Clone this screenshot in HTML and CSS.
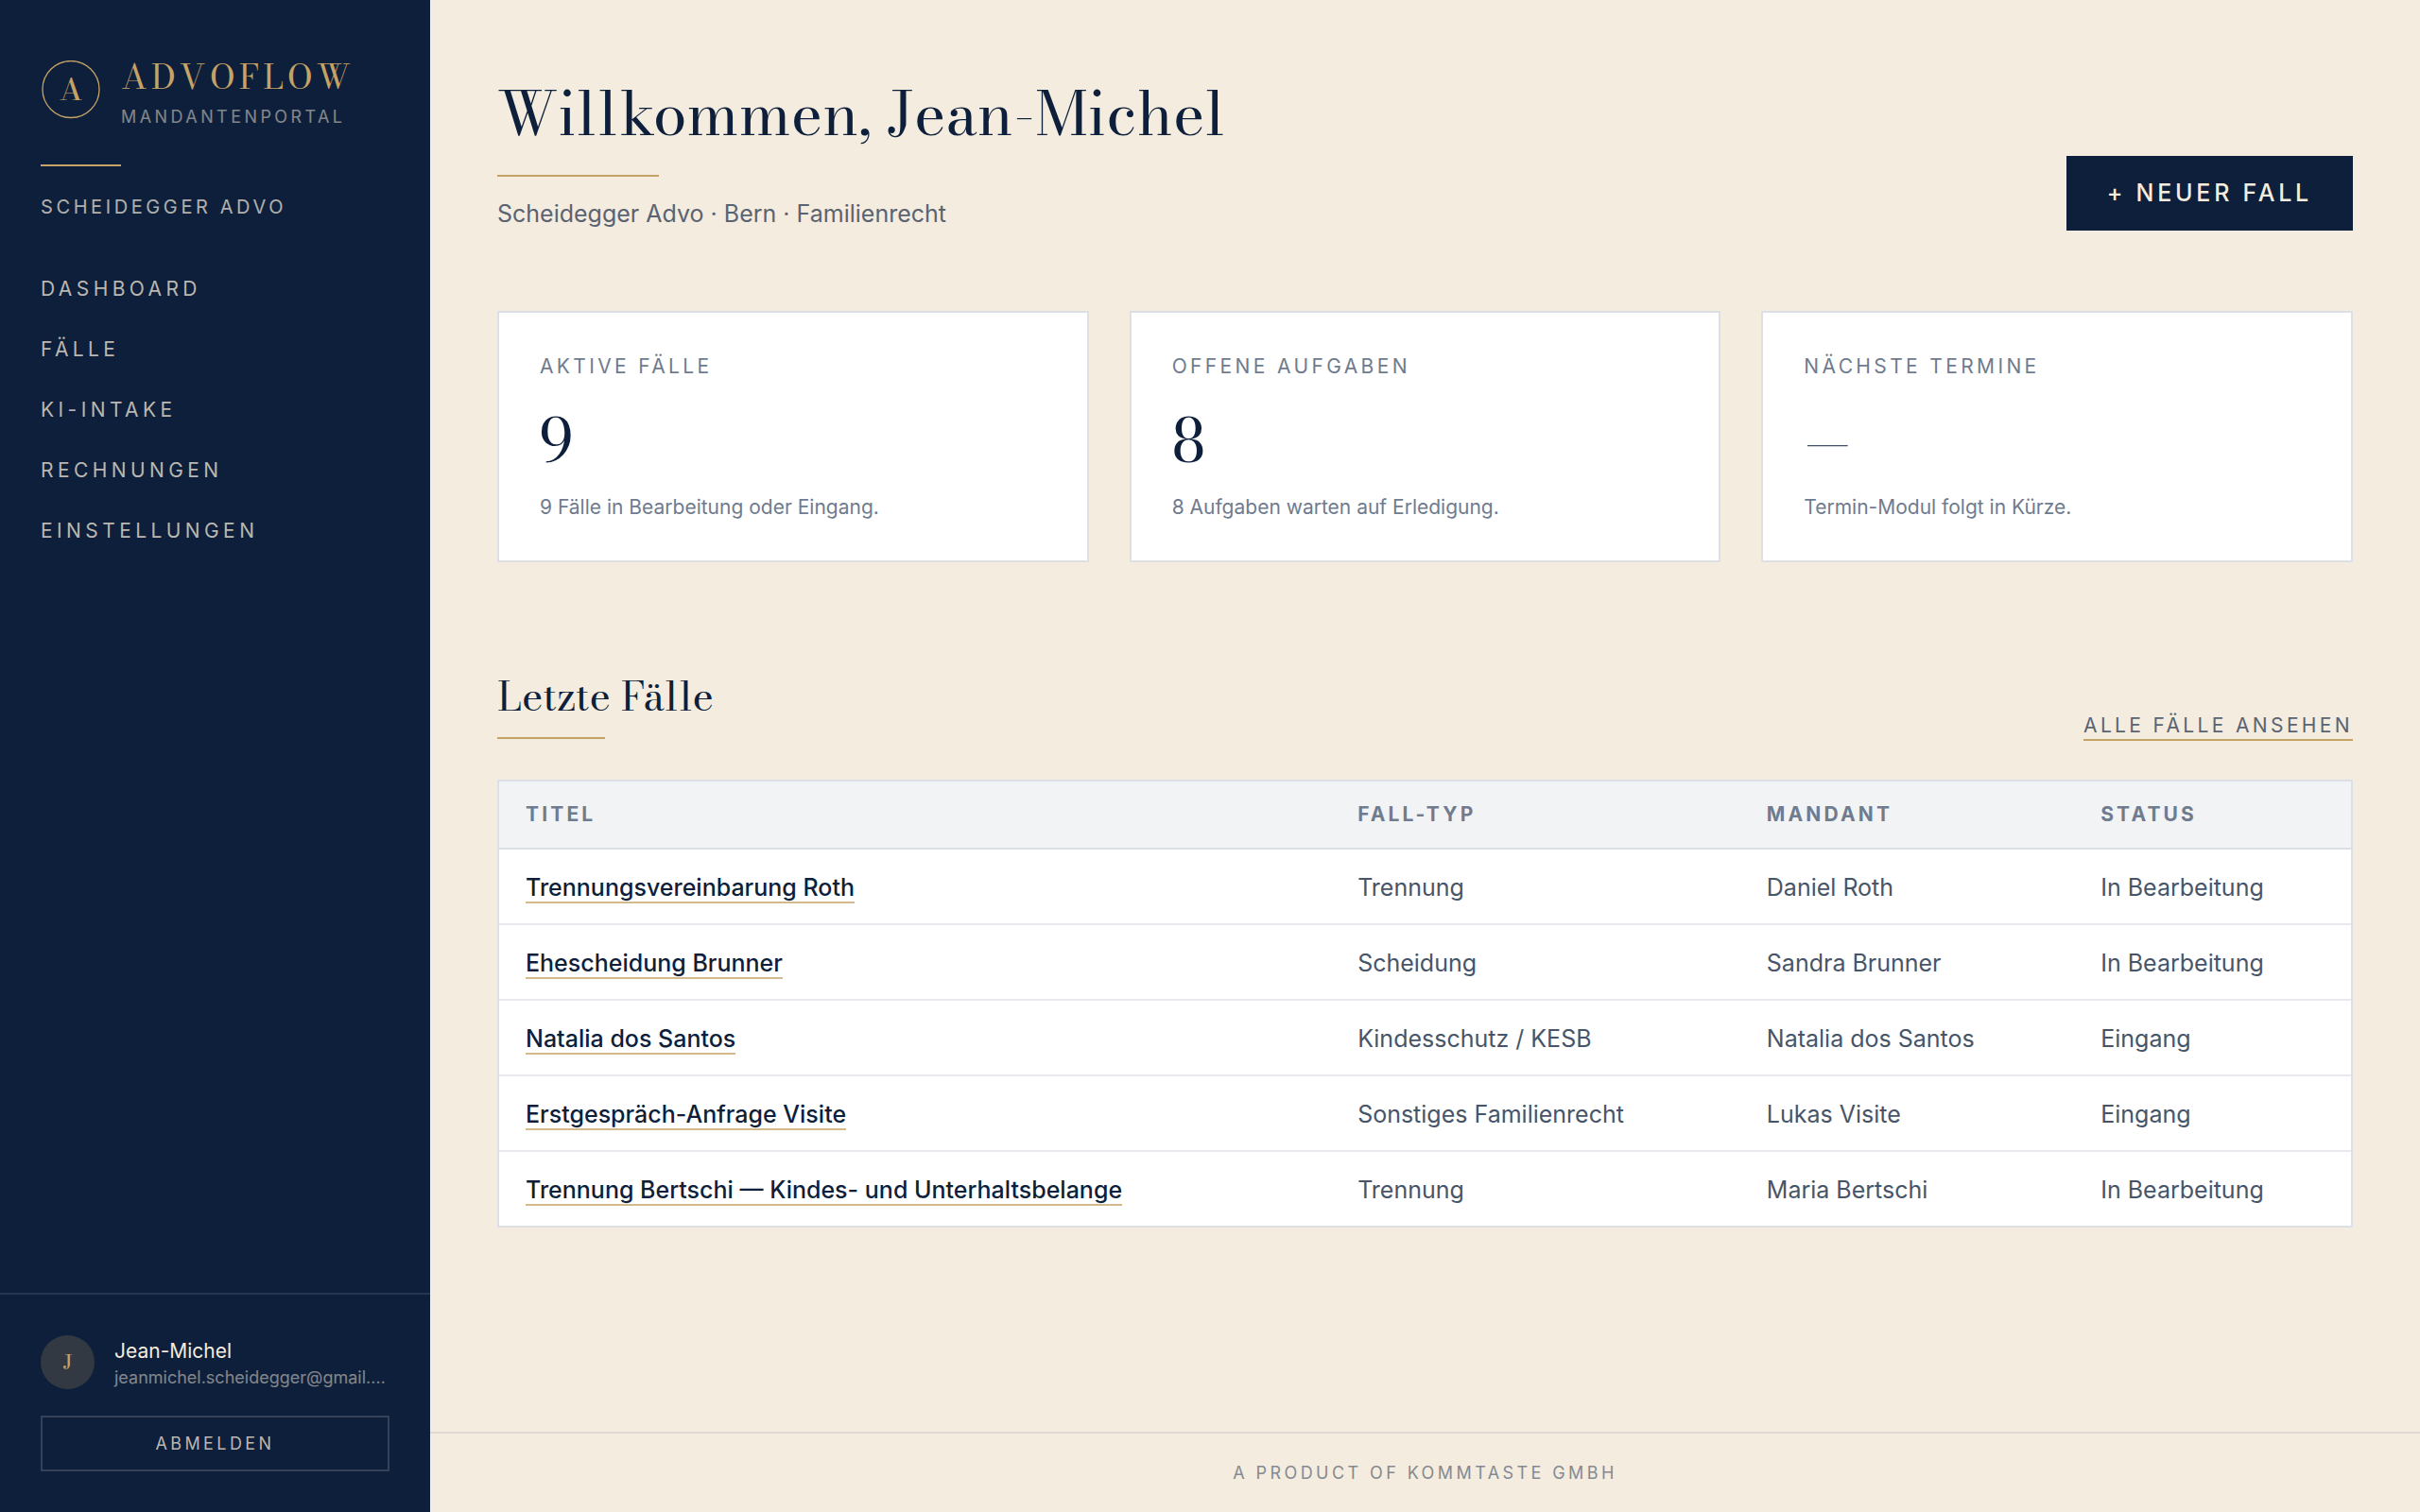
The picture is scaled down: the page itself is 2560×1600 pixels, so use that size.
FILE: index.html
```html
<!DOCTYPE html>
<html lang="de">
<head>
<meta charset="utf-8">
<meta name="viewport" content="width=device-width, initial-scale=1">
<title>AdvoFlow – Mandantenportal</title>
<link rel="stylesheet" href="styles.css">
</head>
<body>
<div class="app">
  <aside class="sidebar">
    <div class="brand">
      <div class="brand-row">
        <svg class="brand-mark" viewBox="0 0 64 64" aria-hidden="true">
          <circle cx="32" cy="30.5" r="30" fill="none" stroke="currentColor" stroke-width="1.3"/>
          <text class="brand-letter" x="32" y="42" text-anchor="middle" fill="currentColor">A</text>
        </svg>
        <div class="brand-text">
          <span class="brand-name">ADVOFLOW</span>
          <span class="brand-sub">MANDANTENPORTAL</span>
        </div>
      </div>
      <div class="rule rule-brand"></div>
      <p class="firm">SCHEIDEGGER ADVO</p>
    </div>
    <nav class="nav">
      <a href="#">DASHBOARD</a>
      <a href="#">FÄLLE</a>
      <a href="#">KI-INTAKE</a>
      <a href="#">RECHNUNGEN</a>
      <a href="#">EINSTELLUNGEN</a>
    </nav>
    <div class="account">
      <div class="user">
        <span class="avatar">J</span>
        <div class="user-text">
          <span class="user-name">Jean-Michel</span>
          <span class="user-mail">jeanmichel.scheidegger@gmail.…</span>
        </div>
      </div>
      <button class="logout" type="button">ABMELDEN</button>
    </div>
  </aside>
  <div class="page">
    <main class="main">
      <header class="page-head">
        <div>
          <h1>Willkommen, Jean-Michel</h1>
          <div class="rule rule-page"></div>
          <p class="subtitle">Scheidegger Advo · Bern · Familienrecht</p>
        </div>
        <button class="primary" type="button">+ NEUER FALL</button>
      </header>
      <section class="cards">
        <article class="card">
          <h2 class="card-label">AKTIVE FÄLLE</h2>
          <p class="card-value">9</p>
          <p class="card-note">9 Fälle in Bearbeitung oder Eingang.</p>
        </article>
        <article class="card">
          <h2 class="card-label">OFFENE AUFGABEN</h2>
          <p class="card-value">8</p>
          <p class="card-note">8 Aufgaben warten auf Erledigung.</p>
        </article>
        <article class="card">
          <h2 class="card-label">NÄCHSTE TERMINE</h2>
          <p class="card-value empty">—</p>
          <p class="card-note">Termin-Modul folgt in Kürze.</p>
        </article>
      </section>
      <section>
        <div class="section-head">
          <div>
            <h2 class="section-title">Letzte Fälle</h2>
            <div class="rule rule-section"></div>
          </div>
          <a class="all-link" href="#">ALLE FÄLLE ANSEHEN</a>
        </div>
        <table class="cases">
          <thead>
            <tr><th scope="col">TITEL</th><th scope="col">FALL-TYP</th><th scope="col">MANDANT</th><th scope="col">STATUS</th></tr>
          </thead>
          <tbody>
            <tr><td><a href="#">Trennungsvereinbarung Roth</a></td><td>Trennung</td><td>Daniel Roth</td><td>In Bearbeitung</td></tr>
            <tr><td><a href="#">Ehescheidung Brunner</a></td><td>Scheidung</td><td>Sandra Brunner</td><td>In Bearbeitung</td></tr>
            <tr><td><a href="#">Natalia dos Santos</a></td><td>Kindesschutz / KESB</td><td>Natalia dos Santos</td><td>Eingang</td></tr>
            <tr><td><a href="#">Erstgespräch-Anfrage Visite</a></td><td>Sonstiges Familienrecht</td><td>Lukas Visite</td><td>Eingang</td></tr>
            <tr><td><a href="#">Trennung Bertschi — Kindes- und Unterhaltsbelange</a></td><td>Trennung</td><td>Maria Bertschi</td><td>In Bearbeitung</td></tr>
          </tbody>
        </table>
      </section>
    </main>
    <footer class="page-foot">A PRODUCT OF KOMMTASTE GMBH</footer>
  </div>
</div>
</body>
</html>
```
FILE: styles.css
```css
:root {
  --navy: #0e1f3b;
  --cream: #f4ecde;
  --gold: #c5a265;
  --line: #dcdfe5;
  --slate: #6f7b8e;
  --serif: "Bodoni Moda", "Libre Bodoni", "Liberation Serif", serif;
}

* {
  box-sizing: border-box;
}

body {
  margin: 0;
  background: var(--cream);
  color: var(--navy);
  font-family: Inter, "Liberation Sans", sans-serif;
}

h1,
h2,
p {
  margin: 0;
  font-weight: 400;
}

a {
  color: inherit;
  text-decoration: none;
}

button {
  font: inherit;
  cursor: pointer;
}

.app {
  display: flex;
  min-height: 100vh;
}

.rule {
  height: 2px;
  background: var(--gold);
}

/* Sidebar */

.sidebar {
  display: flex;
  flex-direction: column;
  flex: none;
  width: 455px;
  background: var(--navy);
  color: var(--cream);
}

.brand {
  padding: 57px 43px 40px;
}

.brand-row {
  display: flex;
  align-items: center;
  gap: 21px;
}

.brand-mark {
  flex: none;
  width: 64px;
  height: 64px;
  color: var(--gold);
}

.brand-letter {
  font-family: var(--serif);
  font-size: 32px;
  font-weight: 500;
}

.brand-text {
  display: flex;
  flex-direction: column;
  gap: 8px;
}

.brand-name {
  color: var(--gold);
  font-family: var(--serif);
  font-size: 36px;
  line-height: 48px;
  letter-spacing: 0.11em;
}

.brand-sub {
  font-size: 18px;
  line-height: 22px;
  letter-spacing: 0.19em;
  opacity: 0.5;
}

.rule-brand {
  width: 85px;
  margin: 39px 0 28px;
}

.firm {
  font-size: 20px;
  line-height: 30px;
  letter-spacing: 0.18em;
  opacity: 0.7;
}

.nav {
  display: flex;
  flex-direction: column;
  padding: 0 43px;
}

.nav a {
  padding: 16px 0;
  color: #bab7b1;
  font-size: 21px;
  line-height: 32px;
  letter-spacing: 0.21em;
}

.account {
  margin-top: auto;
  padding: 43px;
  border-top: 2px solid #263550;
}

.user {
  display: flex;
  align-items: center;
  gap: 21px;
  margin-bottom: 28px;
}

.avatar {
  flex: none;
  width: 57px;
  border-radius: 50%;
  background: #333943;
  color: var(--gold);
  font-family: var(--serif);
  font-size: 21px;
  font-weight: 500;
  line-height: 57px;
  text-align: center;
}

.user-text {
  display: flex;
  flex-direction: column;
  min-width: 0;
}

.user-name {
  font-size: 21px;
  line-height: 32px;
}

.user-mail {
  font-size: 18px;
  line-height: 24px;
  white-space: nowrap;
  opacity: 0.5;
}

.logout {
  width: 100%;
  padding: 16px;
  border: 2px solid #354158;
  background: none;
  color: #bab7b1;
  font-size: 18px;
  line-height: 23px;
  letter-spacing: 0.19em;
}

/* Page */

.page {
  display: flex;
  flex: 1;
  flex-direction: column;
  min-width: 0;
}

.main {
  flex: 1;
  padding: 78px 71px;
}

.page-head {
  display: flex;
  align-items: flex-end;
  justify-content: space-between;
  margin-bottom: 85px;
}

h1 {
  font-family: var(--serif);
  font-size: 64px;
  line-height: 85px;
}

.rule-page {
  width: 171px;
  margin: 22px 0 21px;
}

.subtitle {
  color: #5a6372;
  font-size: 25px;
  line-height: 36px;
}

.primary {
  padding: 22px 43px;
  border: 0;
  background: var(--navy);
  color: var(--cream);
  font-size: 25px;
  font-weight: 500;
  line-height: 35px;
  letter-spacing: 0.15em;
}

.cards {
  display: grid;
  grid-template-columns: repeat(3, 1fr);
  gap: 43px;
  margin-bottom: 114px;
}

.card {
  padding: 41px 43px;
  border: 2px solid var(--line);
  background: #fff;
}

.card-label {
  color: var(--slate);
  font-size: 21px;
  line-height: 32px;
  letter-spacing: 0.16em;
}

.card-value {
  margin: 30px 0 23px;
  font-family: var(--serif);
  font-size: 64px;
  line-height: 64px;
}

.empty {
  color: #3f4d66;
}

.card-note {
  color: var(--slate);
  font-size: 21px;
  line-height: 31px;
}

.section-head {
  display: flex;
  align-items: flex-end;
  justify-content: space-between;
  margin-bottom: 41px;
}

.section-title {
  font-family: var(--serif);
  font-size: 43px;
  line-height: 56px;
}

.rule-section {
  width: 114px;
  margin: 15px 0 2px;
}

.all-link {
  border-bottom: 2px solid var(--gold);
  color: #5a6372;
  font-size: 21px;
  line-height: 28px;
  letter-spacing: 0.16em;
}

.cases {
  width: 100%;
  border: 2px solid var(--line);
  border-spacing: 0;
  background: #fff;
  text-align: left;
}

.cases th {
  padding: 20px 28px;
  border-bottom: 2px solid var(--line);
  background: #f2f3f5;
  color: var(--slate);
  font-size: 21px;
  font-weight: 700;
  line-height: 30px;
  letter-spacing: 0.15em;
}

.cases td {
  padding: 22px 28px 20px;
  border-bottom: 2px solid #e8eaef;
  color: #475569;
  font-size: 25px;
  line-height: 36px;
}

.cases tr:last-child td {
  border-bottom: 0;
}

.cases td a {
  border-bottom: 2px solid #d3b98c;
  color: var(--navy);
  font-weight: 500;
}

.page-foot {
  padding: 25px 25px 24px;
  border-top: 2px solid #dfdad2;
  color: #858a92;
  font-size: 18px;
  line-height: 34px;
  letter-spacing: 0.19em;
  text-align: center;
}
```
